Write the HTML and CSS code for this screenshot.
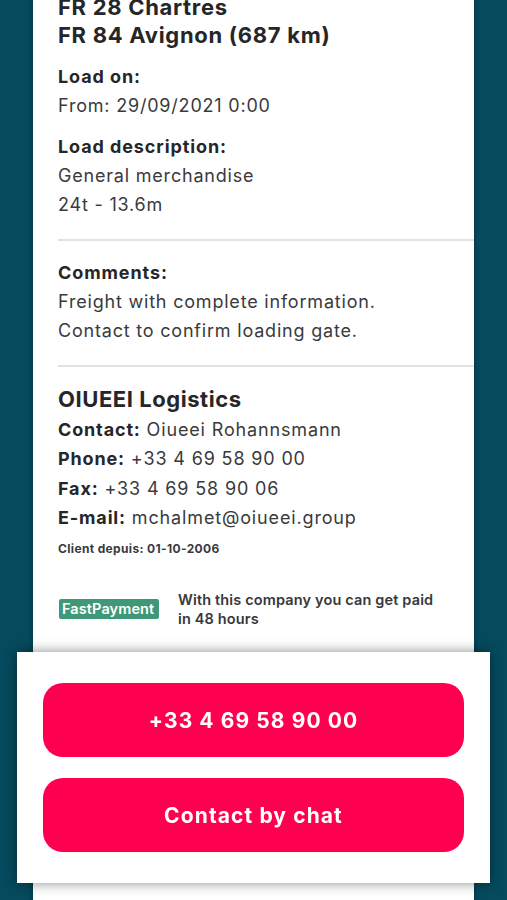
FILE: index.html
```html
<!DOCTYPE html>
<html lang="en">
<head>
<meta charset="utf-8">
<title>Freight detail</title>
<link rel="stylesheet" href="styles.css">
</head>
<body>
<main class="card">
  <h1 class="route">FR 28 Chartres<br>FR 84 Avignon (687 km)</h1>

  <section class="block block-first">
    <div class="label">Load on:</div>
    <div class="value">From: 29/09/2021 0:00</div>
  </section>

  <section class="block">
    <div class="label">Load description:</div>
    <div class="value">General merchandise</div>
    <div class="value">24t - 13.6m</div>
  </section>

  <hr class="divider">

  <section class="block block-after">
    <div class="label">Comments:</div>
    <div class="value">Freight with complete information.</div>
    <div class="value">Contact to confirm loading gate.</div>
  </section>

  <hr class="divider">

  <section class="company">
    <h2 class="company-name">OIUEEI Logistics</h2>
    <div class="line"><b>Contact:</b> Oiueei Rohannsmann</div>
    <div class="line"><b>Phone:</b> +33 4 69 58 90 00</div>
    <div class="line"><b>Fax:</b> +33 4 69 58 90 06</div>
    <div class="line"><b>E-mail:</b> mchalmet@oiueei.group</div>
    <div class="since">Client depuis: 01-10-2006</div>
  </section>

  <div class="fast">
    <span class="badge">FastPayment</span>
    <p class="fast-text">With this company you can get paid<br>in 48 hours</p>
  </div>

  <div class="spacer"></div>
</main>

<div class="actions">
  <button class="btn">+33 4 69 58 90 00</button>
  <button class="btn">Contact by chat</button>
</div>
</body>
</html>
```

FILE: styles.css
```css
html, body {
  margin: 0;
  padding: 0;
}
body {
  background: #064a5e;
  font-family: Inter, "Noto Sans", sans-serif;
  color: #2a2a2c;
  overflow: hidden;
  height: 900px;
}
.card {
  background: #fff;
  margin: -7px 0 0 33px;
  width: 441px;
  padding: 0 0 0 25px;
  box-sizing: border-box;
  box-shadow: 0 0 6px rgba(0, 0, 0, 0.35);
}
.route {
  margin: 0;
  font-size: 22px;
  line-height: 28px;
  font-weight: 700;
  color: #262628;
  letter-spacing: 0.7px;
}
.block {
  margin-top: 11px;
}
.block-first {
  margin-top: 13px;
}
.block-after {
  margin-top: 0;
}
.label {
  font-size: 18px;
  line-height: 29px;
  font-weight: 700;
  color: #262628;
  letter-spacing: 0.9px;
}
.value {
  font-size: 18px;
  line-height: 29.5px;
  color: #3a3a3c;
  letter-spacing: 0.8px;
}
.divider {
  border: 0;
  height: 2px;
  background: #e2e2e2;
  margin: 19px 0 17px 0;
}
.company {
  margin-top: 0;
}
.company-name {
  margin: 0;
  font-size: 22px;
  line-height: 31px;
  font-weight: 700;
  color: #262628;
  letter-spacing: 0.55px;
}
.line {
  font-size: 18px;
  line-height: 29.5px;
  color: #3a3a3c;
  letter-spacing: 0.85px;
}
.line b {
  color: #262628;
  font-weight: 700;
}
.since {
  margin-top: 8px;
  font-size: 12px;
  line-height: 16px;
  font-weight: 700;
  color: #3a3a3c;
  letter-spacing: 0.35px;
}
.fast {
  display: flex;
  align-items: center;
  margin-top: 33px;
}
.badge {
  display: inline-block;
  background: #3f9877;
  color: #fff;
  font-size: 14.5px;
  font-weight: 600;
  line-height: 20px;
  height: 20px;
  padding: 0 0 0 3px;
  border-radius: 2px;
  width: 100px;
  box-sizing: border-box;
  margin-left: 1px;
  white-space: nowrap;
  letter-spacing: 0.1px;
}
.fast-text {
  margin: 0 0 0 19px;
  font-size: 14.5px;
  line-height: 19px;
  font-weight: 600;
  color: #38383a;
  letter-spacing: 0.15px;
}
.spacer {
  height: 400px;
}
.actions {
  position: fixed;
  left: 17px;
  bottom: 17px;
  width: 473px;
  height: 231px;
  box-sizing: border-box;
  background: #fff;
  padding: 31px 26px;
  display: flex;
  flex-direction: column;
  gap: 21px;
  box-shadow: 0 0 12px rgba(0, 0, 0, 0.45);
}
.btn {
  height: 74px;
  border: 0;
  border-radius: 20px;
  background: #ff0050;
  color: #fff;
  font-family: Inter, "Noto Sans", sans-serif;
  font-size: 21px;
  font-weight: 700;
  letter-spacing: 1.1px;
}
```
